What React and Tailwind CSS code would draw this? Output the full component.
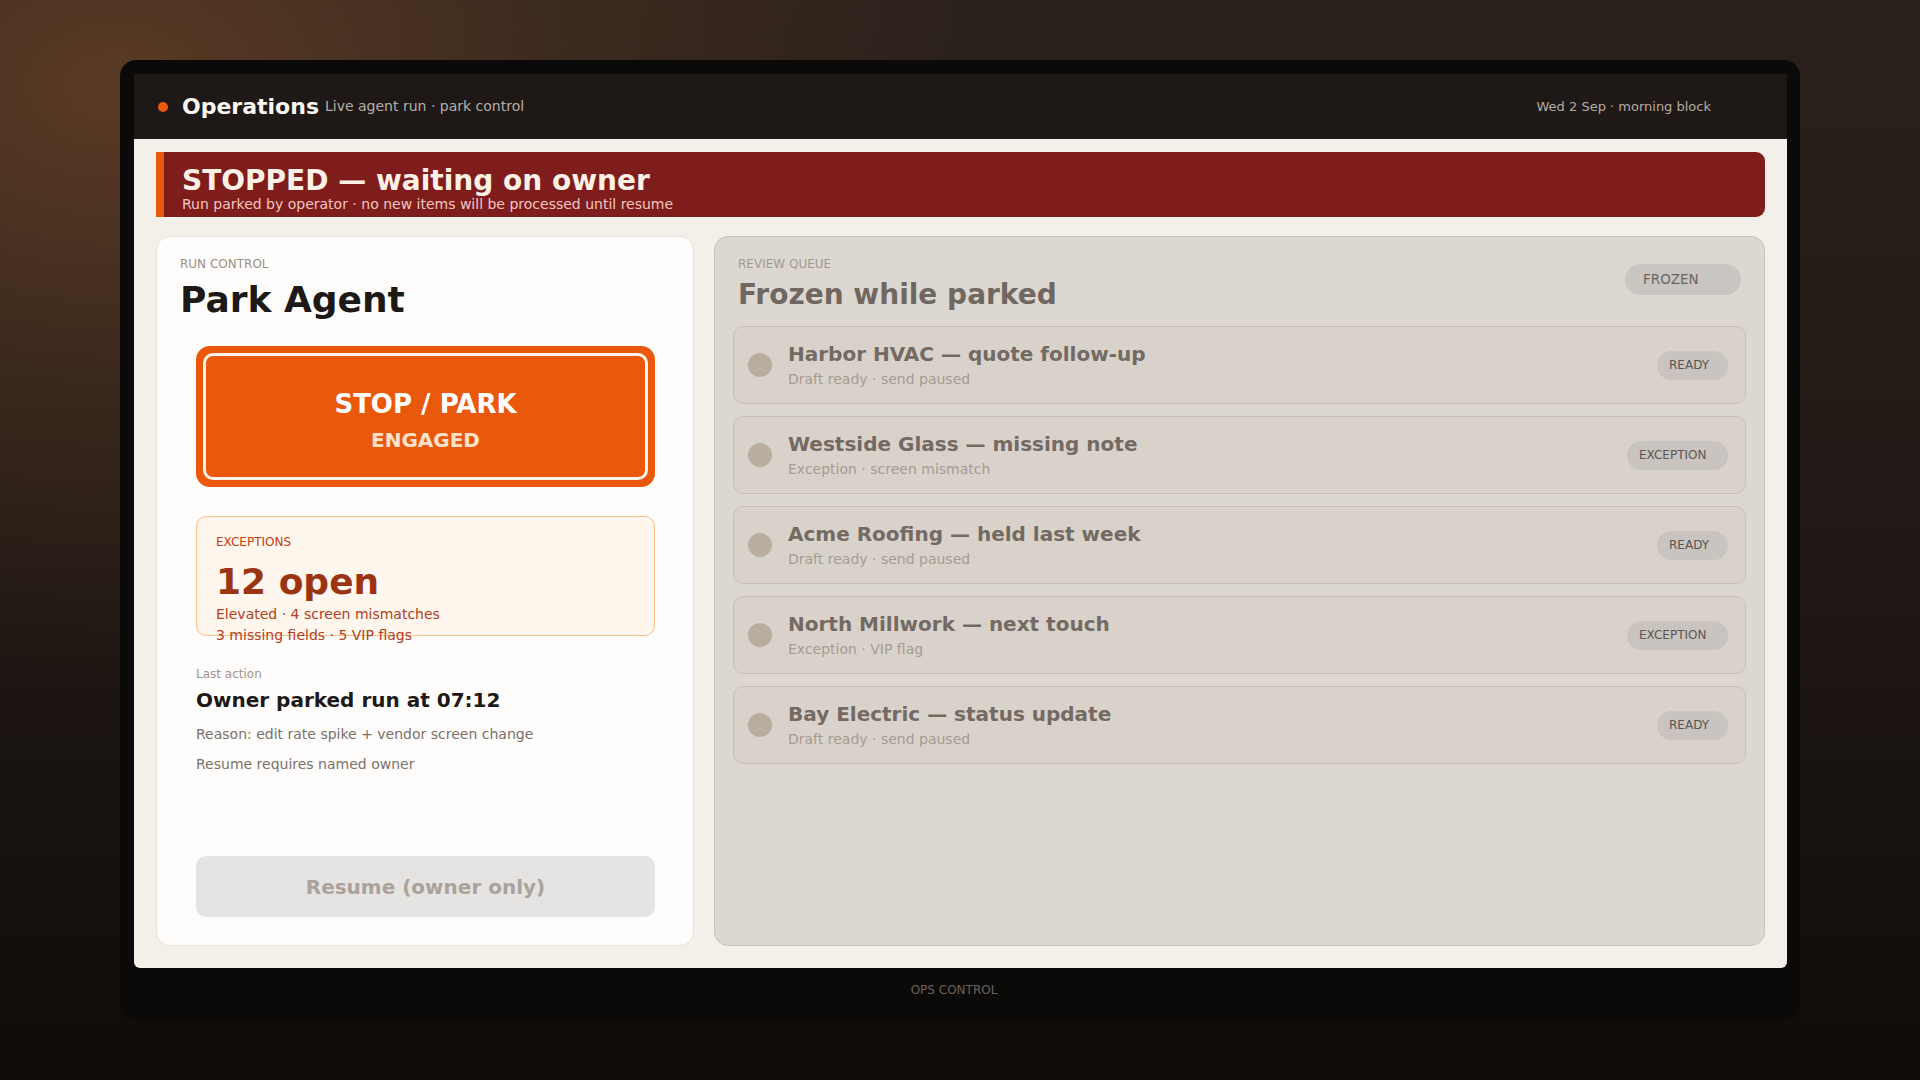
import React from 'react';

const rows = [
  { title: 'Harbor HVAC — quote follow-up', sub: 'Draft ready · send paused', tag: 'READY' },
  { title: 'Westside Glass — missing note', sub: 'Exception · screen mismatch', tag: 'EXCEPTION' },
  { title: 'Acme Roofing — held last week', sub: 'Draft ready · send paused', tag: 'READY' },
  { title: 'North Millwork — next touch', sub: 'Exception · VIP flag', tag: 'EXCEPTION' },
  { title: 'Bay Electric — status update', sub: 'Draft ready · send paused', tag: 'READY' },
];

function QueueRow({ row }) {
  return (
    <div className="h-[78px] flex items-center pl-[14px] pr-[17px] bg-[#d9d2cb] border border-[#c9bfb4] rounded-[10px]">
      <div className="w-6 h-6 rounded-full bg-[#b9ad9f] shrink-0"></div>
      <div className="ml-[16px] flex flex-col">
        <div className="text-[20px] leading-[26px] font-bold text-[#736a63]">{row.title}</div>
        <div className="mt-[2px] text-[14px] leading-[20px] text-[#a59c94]">{row.sub}</div>
      </div>
      <div
        className={
          row.tag === 'READY'
            ? 'ml-auto h-[29px] w-[71px] pl-[12px] flex items-center rounded-full bg-[#c9c4c0] text-[12px] text-[#5c5651]'
            : 'ml-auto h-[29px] w-[101px] pl-[12px] flex items-center rounded-full bg-[#c9c4c0] text-[12px] text-[#5c5651]'
        }
      >
        {row.tag}
      </div>
    </div>
  );
}

export default function App() {
  return (
    <div className="min-h-screen w-full font-['DejaVu_Sans',sans-serif] bg-[radial-gradient(ellipse_45%_55%_at_6%_8%,#5a3a24_0%,rgba(90,58,36,0.35)_55%,transparent_100%),linear-gradient(180deg,#2b211c_0%,#221a16_45%,#100c0a_100%)] flex justify-center pt-[60px] pb-[60px]">
      {/* Device frame */}
      <div className="w-[1680px] h-[960px] bg-[#0c0a08] rounded-[16px] pl-[14px] pr-[13px] pt-[14px] flex flex-col">
        <div className="h-[894px] flex flex-col rounded-b-[6px] overflow-hidden">
          {/* Top bar */}
          <header className="h-[65px] shrink-0 bg-[#1e1916] flex items-center pl-[24px] pr-[76px]">
            <div className="w-[10px] h-[10px] rounded-full bg-[#e8590c]"></div>
            <div className="ml-[14px] flex items-center gap-[6px]">
              <span className="text-[22px] font-bold text-[#fbf6f1]">Operations</span>
              <span className="text-[14px] text-[#b7aea7]">Live agent run · park control</span>
            </div>
            <div className="ml-auto text-[13px] text-[#b5aca5]">Wed 2 Sep · morning block</div>
          </header>

          <main className="flex-1 bg-[#f3efe9] px-[22px] pt-[13px] pb-[22px] flex flex-col">
            {/* Stopped banner */}
            <div className="h-[65px] shrink-0 bg-[#7f1d1d] border-l-[8px] border-[#ea580c] rounded-r-[9px] pl-[18px] pt-[14px]">
              <div className="text-[28px] leading-[30px] font-bold text-[#fdf1e7]">STOPPED — waiting on owner</div>
              <div className="text-[14px] leading-[17px] text-[#f1c6c1]">Run parked by operator · no new items will be processed until resume</div>
            </div>

            <div className="mt-[19px] flex-1 grid grid-cols-[538px_1fr] gap-[20px]">
              {/* Run control card */}
              <section className="bg-[#fefdfb] border border-[#e9e1d8] rounded-[14px] pt-[19px] pl-[23px] pr-[22px] pb-[22px] flex flex-col">
                <div className="text-[12px] leading-4 text-[#9c8f85]">RUN CONTROL</div>
                <h1 className="mt-[6px] text-[36px] leading-[44px] font-bold text-[#1c1917]">Park Agent</h1>

                <div className="mx-[16px] flex-1 flex flex-col">
                  <div className="mt-[24px] h-[141px] bg-[#ea580c] rounded-[14px] p-[7px]">
                    <div className="h-full border-[3px] border-[#fdf3ea] rounded-[10px] flex flex-col items-center justify-center pt-[8px]">
                      <div className="text-[26px] leading-[32px] font-bold text-white">STOP / PARK</div>
                      <div className="mt-[7px] text-[20px] leading-[26px] font-bold text-[#fde3c9]">ENGAGED</div>
                    </div>
                  </div>

                  <div className="mt-[29px] h-[120px] bg-[#fff6ee] border border-[#f9c08c] rounded-[10px] pt-[17px] pl-[19px]">
                    <div className="text-[12px] leading-4 text-[#c2410c]">EXCEPTIONS</div>
                    <div className="mt-[10px] text-[36px] leading-[43px] font-bold text-[#9a3412]">12 open</div>
                    <div className="mt-[1px] text-[14px] leading-[21px] text-[#b2401a]">Elevated · 4 screen mismatches</div>
                    <div className="text-[14px] leading-[21px] text-[#b2401a]">3 missing fields · 5 VIP flags</div>
                  </div>

                  <div className="mt-[30px] text-[12px] leading-4 text-[#a1958b]">Last action</div>
                  <div className="mt-[4px] text-[20px] leading-[28px] font-bold text-[#1c1917]">Owner parked run at 07:12</div>
                  <div className="mt-[10px] text-[14px] leading-[20px] text-[#7a716a]">Reason: edit rate spike + vendor screen change</div>
                  <div className="mt-[10px] text-[14px] leading-[20px] text-[#7a716a]">Resume requires named owner</div>

                  <div className="mt-auto mb-[6px] h-[61px] bg-[#e5e4e2] rounded-[10px] flex items-center justify-center text-[20px] font-bold text-[#aba29b]">
                    Resume (owner only)
                  </div>
                </div>
              </section>

              {/* Review queue panel */}
              <section className="bg-[#dcd7d1] border border-[#cbc3ba] rounded-[14px] pt-[19px] px-[18px] pb-[18px] flex flex-col">
                <div className="px-[5px] flex items-start justify-between">
                  <div>
                    <div className="text-[12px] leading-4 text-[#a49a91]">REVIEW QUEUE</div>
                    <h2 className="mt-[6px] text-[28px] leading-[34px] font-bold text-[#6f6760]">Frozen while parked</h2>
                  </div>
                  <div className="mt-[8px] h-[31px] w-[116px] pl-[18px] flex items-center rounded-full bg-[#c9c5c1] text-[13.5px] text-[#6b6560]">
                    FROZEN
                  </div>
                </div>

                <div className="mt-[14px] flex flex-col gap-[12px]">
                  {rows.map((r, i) => (
                    <QueueRow key={i} row={r} />
                  ))}
                </div>
              </section>
            </div>
          </main>
        </div>

        <div className="pt-[14px] pr-[13px] text-center text-[12px] leading-4 text-[#6b625b]">OPS CONTROL</div>
      </div>
    </div>
  );
}
